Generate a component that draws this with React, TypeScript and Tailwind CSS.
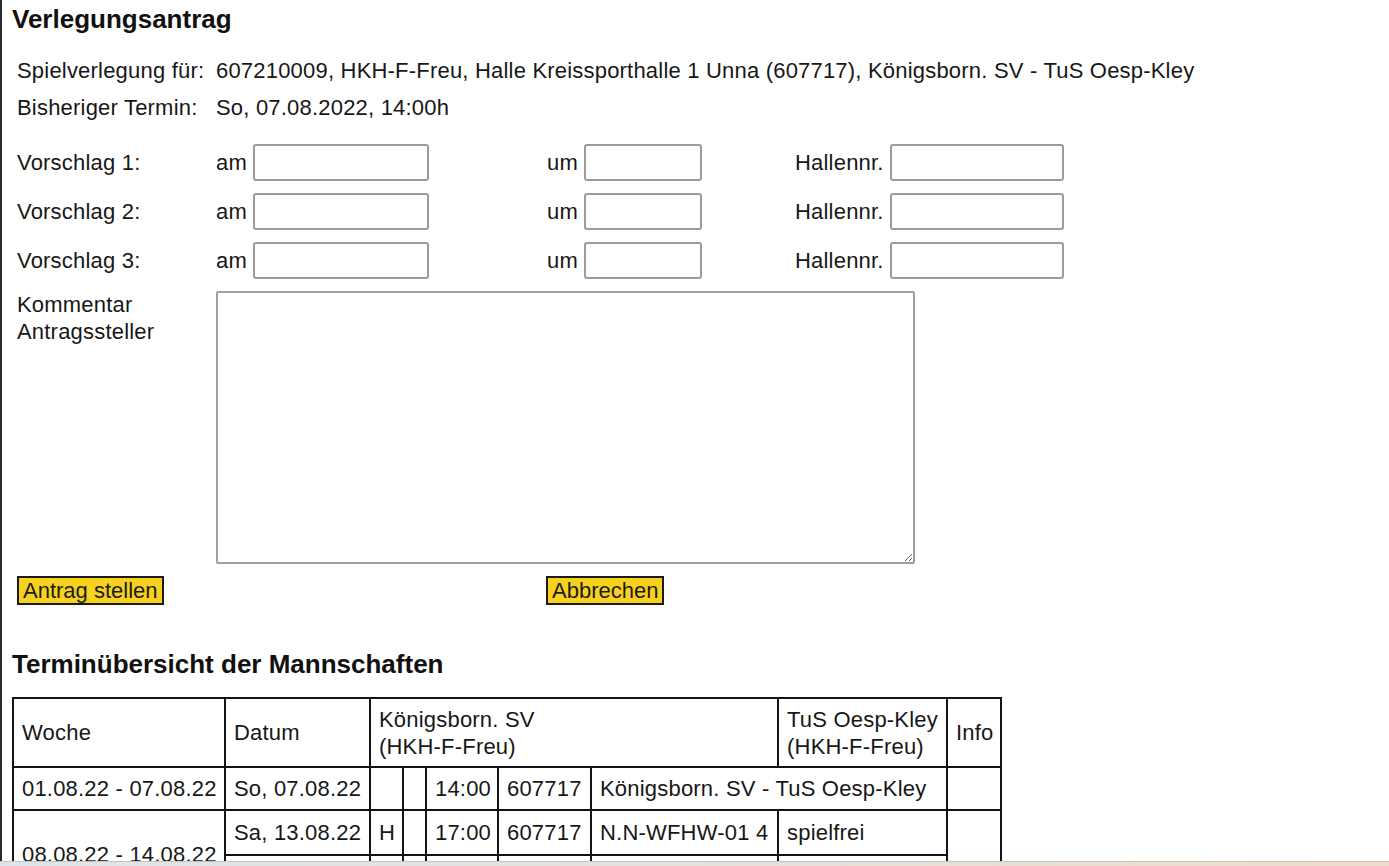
import React from "react";

const td = "border-2 border-[#141414] px-[8px] align-middle whitespace-nowrap";

function Field({ w }: { w: string }) {
  return (
    <input
      type="text"
      className={`ml-[6px] h-[37px] ${w} rounded-[3px] border-2 border-[#9b9b9b] bg-white outline-none`}
    />
  );
}

function Vorschlag({ n }: { n: number }) {
  return (
    <div className="flex h-[37px] items-center">
      <div className="w-[199px]">Vorschlag {n}:</div>
      <div className="flex w-[331px] items-center">
        <span>am</span>
        <Field w="w-[176px]" />
      </div>
      <div className="flex w-[248px] items-center">
        <span>um</span>
        <Field w="w-[118px]" />
      </div>
      <div className="flex items-center">
        <span>Hallennr.</span>
        <Field w="w-[174px]" />
      </div>
    </div>
  );
}

export default function App() {
  return (
    <div className="flex h-[866px] w-[1389px] flex-col overflow-hidden bg-white font-['Liberation_Sans',Arial,sans-serif] text-[22px] leading-[25px] tracking-[0.2px] text-[#171717]">
      <div className="flex-1 overflow-hidden border-l-[2px] border-[#2a2a2a] pl-[10px] pt-[6px]">
        <h3 className="text-[26px] font-bold leading-[26px] tracking-normal text-[#111]">Verlegungsantrag</h3>

        <div className="mt-[19.5px] pl-[5px]">
          <div className="flex h-[37px] items-center">
            <div className="w-[199px]">Spielverlegung für:</div>
            <div>607210009, HKH-F-Freu, Halle Kreissporthalle 1 Unna (607717), Königsborn. SV - TuS Oesp-Kley</div>
          </div>
          <div className="flex h-[37px] items-center">
            <div className="w-[199px]">Bisheriger Termin:</div>
            <div>So, 07.08.2022, 14:00h</div>
          </div>

          <div className="mt-[18px] flex flex-col gap-[12px]">
            <Vorschlag n={1} />
            <Vorschlag n={2} />
            <Vorschlag n={3} />
          </div>

          <div className="mt-[12.5px] flex items-start">
            <div className="w-[199px] pt-0 leading-[27px]">
              Kommentar
              <br />
              Antragssteller
            </div>
            <textarea className="h-[273px] w-[699px] rounded-[2px] border-2 border-[#a0a0a0] bg-white outline-none" />
          </div>

          <div className="mt-[12px] flex">
            <div className="w-[529px]">
              <button className="h-[29px] border-2 border-[#1a1a1a] bg-[#f6d21e] px-[4px] text-[22px] leading-[24px] tracking-normal text-[#1c1c1c]">
                Antrag stellen
              </button>
            </div>
            <button className="h-[29px] border-2 border-[#1a1a1a] bg-[#f6d21e] px-[4px] text-[22px] leading-[24px] tracking-normal text-[#1c1c1c]">
              Abbrechen
            </button>
          </div>
        </div>

        <h3 className="mt-[46px] text-[26px] font-bold leading-[26px] tracking-normal text-[#111]">Terminübersicht der Mannschaften</h3>

        <table className="mt-[20px] w-[988px] table-fixed border-collapse">
          <colgroup>
            <col className="w-[212px]" />
            <col className="w-[145px]" />
            <col className="w-[33px]" />
            <col className="w-[23px]" />
            <col className="w-[72px]" />
            <col className="w-[93px]" />
            <col className="w-[187px]" />
            <col className="w-[169px]" />
            <col className="w-[54px]" />
          </colgroup>
          <tbody>
            <tr className="h-[69px]">
              <td className={td}>Woche</td>
              <td className={td}>Datum</td>
              <td className={`${td} leading-[27px]`} colSpan={5}>
                Königsborn. SV
                <br />
                (HKH-F-Freu)
              </td>
              <td className={`${td} leading-[27px]`}>
                TuS Oesp-Kley
                <br />
                (HKH-F-Freu)
              </td>
              <td className={td}>Info</td>
            </tr>
            <tr className="h-[43px]">
              <td className={td}>01.08.22 - 07.08.22</td>
              <td className={td}>So, 07.08.22</td>
              <td className={td}></td>
              <td className={td}></td>
              <td className={td}>14:00</td>
              <td className={td}>607717</td>
              <td className={td} colSpan={2}>
                Königsborn. SV - TuS Oesp-Kley
              </td>
              <td className={td}></td>
            </tr>
            <tr className="h-[45px]">
              <td className={td} rowSpan={2}>
                08.08.22 - 14.08.22
              </td>
              <td className={td}>Sa, 13.08.22</td>
              <td className={td}>H</td>
              <td className={td}></td>
              <td className={td}>17:00</td>
              <td className={td}>607717</td>
              <td className={td}>N.N-WFHW-01 4</td>
              <td className={td}>spielfrei</td>
              <td className={td} rowSpan={2}></td>
            </tr>
            <tr className="h-[43px]">
              <td className={td}>So, 14.08.22</td>
              <td className={td}></td>
              <td className={td}></td>
              <td className={td}></td>
              <td className={td}></td>
              <td className={td}></td>
              <td className={td}></td>
            </tr>
          </tbody>
        </table>
      </div>
      <div className="h-[5px] shrink-0 border-t border-[#c4c4c4] bg-gradient-to-r from-[#dde5ea] to-[#eedccb]" />
    </div>
  );
}
